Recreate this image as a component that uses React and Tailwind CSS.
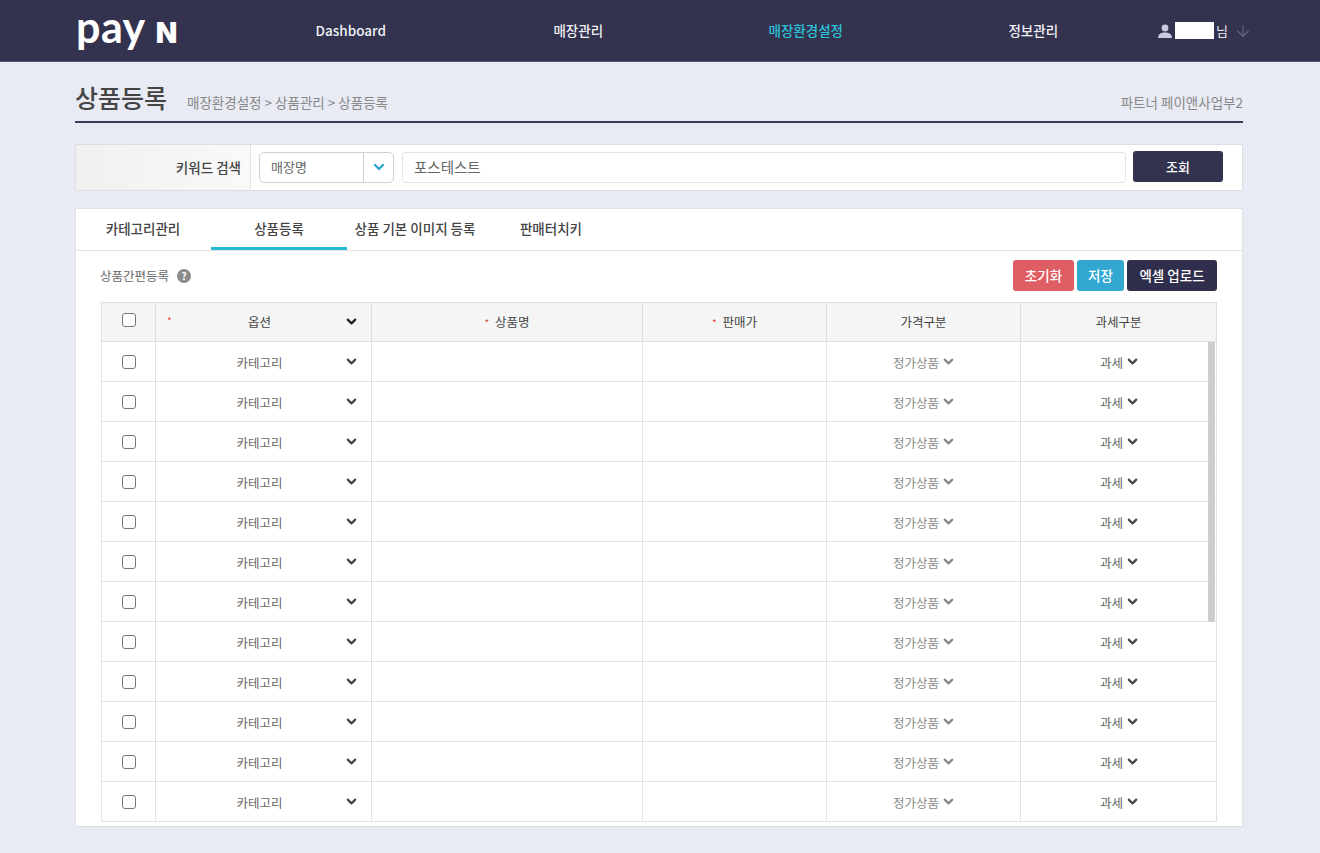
import React from "react";
import { ArrowDown, ChevronDown } from "lucide-react";

const NAV = [
  { label: "Dashboard" },
  { label: "매장관리" },
  { label: "매장환경설정", active: true },
  { label: "정보관리" },
];

const TABS = ["카테고리관리", "상품등록", "상품 기본 이미지 등록", "판매터치키"];
const ROWS = Array.from({ length: 12 }, (_, i) => i);

const Check = ({ className = "" }) => (
  <span className={`block w-[14px] h-[14px] mx-auto rounded-[3px] border border-[#767676] bg-white ${className}`} />
);

const Required = ({ className = "" }) => (
  <span className={`text-[#e5484d] text-[10px] leading-none ${className}`}>*</span>
);

const App = () => (
  <div className="min-h-[853px] bg-[#e8ebf3] text-[#444] font-['Noto_Sans_CJK_KR','Noto_Sans',sans-serif]">

    {/* Header */}
    <header className="h-[62px] bg-[#33324f] border-b border-[#5a5a72] flex items-center pl-[76px]">
      <div className="w-[161px] flex items-baseline text-white leading-none -mt-[9px]">
        <span className="font-['Lato',sans-serif] text-[43px] font-bold tracking-[0.5px]">pay</span>
        <span className="font-['Inter',sans-serif] text-[28px] font-black ml-[10px]">N</span>
      </div>
      <nav className="flex">
        {NAV.map((n) => (
          <a key={n.label}
            className={`w-[227.5px] text-center text-[13.5px] font-medium ${n.active ? "text-[#2cc4d8]" : "text-[#f1f1f5]"}`}>
            {n.label}
          </a>
        ))}
      </nav>
      <div className="flex items-center ml-[11px] text-[#e8e8f0]">
        <svg width="14" height="14" viewBox="0 0 14 14" className="fill-[#c9cbe3] mr-[3px]">
          <circle cx="7" cy="4" r="3.4" />
          <path d="M0 14c0-4 3-5.6 7-5.6s7 1.6 7 5.6z" />
        </svg>
        <span className="w-[39px] h-[17px] bg-white" />
        <span className="text-[13px] ml-[2px]">님</span>
        <ArrowDown className="w-[18px] h-[18px] ml-[6px] text-[#5f6080]" strokeWidth={1.8} />
      </div>
    </header>

    <main className="mx-[75px] w-[1168px]">

      {/* Title */}
      <div className="h-[61px] border-b-2 border-[#3a3958] flex items-end justify-between pb-[5px]">
        <div className="flex items-end">
          <h1 className="text-[25px] leading-[38px] font-medium text-[#444]">상품등록</h1>
          <p className="ml-[20px] mb-[4px] text-[13.5px] leading-[20px] text-[#888]">매장환경설정 &gt; 상품관리 &gt; 상품등록</p>
        </div>
        <p className="mb-[4px] text-[13.5px] leading-[20px] text-[#888]">파트너 페이앤사업부2</p>
      </div>

      {/* Keyword search */}
      <section className="mt-[21px] h-[47px] bg-white border border-[#dcdee4] flex items-center">
        <div className="w-[175px] h-full bg-gradient-to-r from-[#f0f0f0] to-[#f9f9f9] border-r border-[#e2e2e2] flex items-center justify-end pr-[9px] text-[13.5px] font-medium text-[#444]">
          키워드 검색
        </div>
        <div className="ml-[8px] w-[135px] h-[31px] -mt-[1px] border border-[#d0d0d0] rounded-[5px] flex items-center">
          <span className="flex-1 pl-[11px] text-[13px] text-[#666]">매장명</span>
          <span className="w-[30px] h-full border-l border-[#d0d0d0] flex items-center justify-center">
            <ChevronDown className="w-[16px] h-[16px] text-[#2aa4cf]" strokeWidth={3.5} />
          </span>
        </div>
        <div className="ml-[8px] w-[724px] h-[31px] -mt-[1px] border border-[#e4e4e4] rounded-[3px] flex items-center pl-[11px] text-[14.5px] text-[#666]">
          포스테스트
        </div>
        <button className="ml-[7px] w-[90px] h-[31px] -mt-[2px] rounded-[3px] bg-[#33324f] text-white text-[13px] font-medium">조회</button>
      </section>

      {/* Main card */}
      <section className="mt-[17px] h-[619px] bg-white border border-[#dfe1e7]">
        <div className="flex h-[42px] border-b border-[#e2e2e2] -ml-px">
          {TABS.map((t, i) => (
            <div key={t}
              className={`w-[136px] h-[41px] flex items-center justify-center pb-[3px] text-[13.5px] font-medium text-[#444] ${i === 1 ? "border-b-[3px] border-[#22bdd0] pt-[3px]" : ""}`}>
              {t}
            </div>
          ))}
        </div>

        <div className="flex items-center justify-between h-[31px] mt-[9px] pl-[24px] pr-[25px]">
          <div className="flex items-center text-[12.5px] text-[#666] pt-[1px]">
            상품간편등록
            <span className="ml-[8px] w-[14px] h-[14px] rounded-full bg-[#8c8c8c] text-white text-[10px] font-bold leading-none flex items-center justify-center">?</span>
          </div>
          <div className="flex gap-[3px] text-white text-[13.5px] font-medium">
            <button className="w-[61px] h-[31px] pb-[1px] rounded-[3px] bg-[#df5e63]">초기화</button>
            <button className="w-[47px] h-[31px] pb-[1px] rounded-[3px] bg-[#31a7d1]">저장</button>
            <button className="w-[90px] h-[31px] pb-[1px] rounded-[3px] bg-[#2f2e4c]">엑셀 업로드</button>
          </div>
        </div>

        {/* Grid */}
        <div className="relative mt-[11px] ml-[25px] w-[1115px]">
          <table className="w-full table-fixed border-collapse text-[12.5px]">
            <colgroup>
              <col className="w-[54px]" />
              <col className="w-[216px]" />
              <col className="w-[271px]" />
              <col className="w-[184px]" />
              <col className="w-[194px]" />
              <col className="w-[196px]" />
            </colgroup>
            <thead>
              <tr className="h-[39px] bg-[#f5f5f5] text-[#444]">
                <th className="border border-[#dedede] font-normal"><Check className="-mt-[5px]" /></th>
                <th className="relative border border-[#dedede] font-normal pr-[8px]">
                  <Required className="absolute left-[11px] top-[13px]" />
                  옵션
                  <ChevronDown className="absolute right-[12px] top-[11px] w-[15px] h-[15px] text-[#222]" strokeWidth={3.6} />
                </th>
                <th className="border border-[#dedede] font-normal"><Required className="mr-[6px]" />상품명</th>
                <th className="border border-[#dedede] font-normal"><Required className="mr-[6px]" />판매가</th>
                <th className="border border-[#dedede] font-normal">가격구분</th>
                <th className="border border-[#dedede] font-normal">과세구분</th>
              </tr>
            </thead>
            <tbody>
              {ROWS.map((r) => (
                <tr key={r} className="h-[40px] text-[#666]">
                  <td className="border border-[#e2e2e2]"><Check /></td>
                  <td className="relative border border-[#e2e2e2] text-center pr-[8px] pt-[3px]">
                    카테고리
                    <ChevronDown className="absolute right-[12px] top-[12px] w-[15px] h-[15px] text-[#444]" strokeWidth={3.4} />
                  </td>
                  <td className="border border-[#e2e2e2]" />
                  <td className="border border-[#e2e2e2]" />
                  <td className="border border-[#e2e2e2] text-center text-[#888] pt-[3px] pl-[2px]">
                    <span className="inline-flex items-center gap-[2px]">
                      정가상품
                      <ChevronDown className="w-[15px] h-[15px] -mt-[3px] text-[#888]" strokeWidth={3.4} />
                    </span>
                  </td>
                  <td className="border border-[#e2e2e2] text-center pt-[3px] pl-[3px]">
                    <span className="inline-flex items-center gap-[2px]">
                      과세
                      <ChevronDown className="w-[15px] h-[15px] -mt-[3px] text-[#444]" strokeWidth={3.4} />
                    </span>
                  </td>
                </tr>
              ))}
            </tbody>
          </table>
          {/* Scrollbar thumb */}
          <div className="absolute left-[1107px] top-[40px] w-[7px] h-[280px] rounded-b-[3px] bg-[#cdcdcd]" />
        </div>
      </section>
    </main>
  </div>
);

export default App;
